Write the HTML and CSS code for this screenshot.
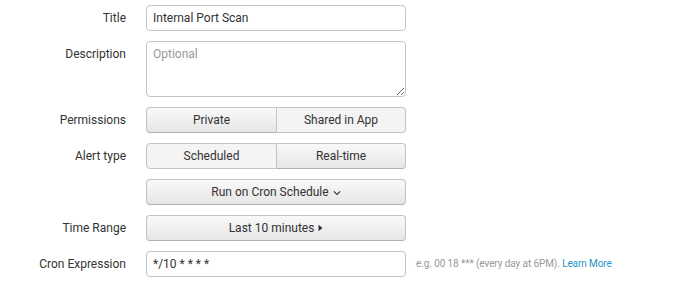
FILE: index.html
```html
<!DOCTYPE html>
<html lang="en">
    <head>
        <meta charset="UTF-8">
        <title>Alert settings</title>
        <link rel="stylesheet" href="styles.css">
    </head>
    <body>
        <form class="alert-form">
            <div class="row">
                <label class="label" for="title">Title</label>
                <input class="field" id="title" type="text" value="Internal Port Scan">
            </div>
            <div class="row">
                <label class="label" for="desc">Description</label>
                <textarea class="field area" id="desc" placeholder="Optional"></textarea>
            </div>
            <div class="row">
                <span class="label">Permissions</span>
                <div class="group">
                    <button type="button" class="btn">Private</button>
                    <button type="button" class="btn active">Shared in App</button>
                </div>
            </div>
            <div class="row">
                <span class="label">Alert type</span>
                <div class="group">
                    <button type="button" class="btn active">Scheduled</button>
                    <button type="button" class="btn">Real-time</button>
                </div>
            </div>
            <div class="row">
                <span class="label"></span>
                <button type="button" class="btn wide">Run on Cron Schedule
                    <svg class="caret" width="8" height="6" viewBox="0 0 8 6"><path d="M0.8 1.4 L4 4.4 L7.2 1.4" fill="none" stroke="#333" stroke-width="1.1"/></svg>
                </button>
            </div>
            <div class="row">
                <span class="label">Time Range</span>
                <button type="button" class="btn wide">Last 10 minutes
                    <svg class="arrow" width="5" height="8" viewBox="0 0 5 8"><path d="M0.5 0.8 L4.5 4 L0.5 7.2 Z" fill="#333"/></svg>
                </button>
            </div>
            <div class="row">
                <label class="label" for="cron">Cron Expression</label>
                <input class="field" id="cron" type="text" value="*/10 * * * *">
                <span class="hint">e.g. 00 18 *** (every day at 6PM). <a href="#">Learn More</a></span>
            </div>
        </form>
    </body>
</html>
```

FILE: styles.css
```css
*{
    font-family: Roboto, "Liberation Sans", sans-serif;
    box-sizing: border-box;
}
body{
    margin: 0;
    background: #fff;
    color: #333;
    font-size: 12px;
}
.alert-form{
    padding-top: 5px;
    display: flex;
    flex-direction: column;
    gap: 10px;
}
.row{
    display: flex;
    align-items: flex-start;
}
.label{
    width: 126px;
    margin-right: 20px;
    text-align: right;
    line-height: 26px;
    font-size: 12px;
    color: #333;
}
.field{
    width: 260px;
    height: 26px;
    border: 1px solid #c3c3c3;
    border-radius: 4px;
    padding: 0 6px;
    font-size: 12px;
    color: #333;
    background: #fff;
    outline: none;
}
.area{
    height: 56px;
    padding: 4px 6px;
    resize: vertical;
    line-height: 16px;
}
.area::placeholder{
    color: #999;
}
.group{
    display: flex;
    width: 260px;
}
.btn{
    height: 26px;
    border: 1px solid #c3c3c3;
    border-bottom-color: #b0b0b0;
    border-radius: 4px;
    background: linear-gradient(#f9f9f9, #e6e6e6);
    font-size: 12px;
    color: #333;
    padding: 0;
}
.group .btn{
    flex: 1;
}
.group .btn:first-child{
    border-top-right-radius: 0;
    border-bottom-right-radius: 0;
    width: 131px;
    flex: none;
}
.group .btn:last-child{
    border-top-left-radius: 0;
    border-bottom-left-radius: 0;
    border-left: none;
}
.btn.active{
    background: #f4f4f4;
    border-bottom-color: #c3c3c3;
}
.wide{
    width: 260px;
    display: flex;
    align-items: center;
    justify-content: center;
    gap: 4px;
}
.caret{
    margin-top: 1px;
}
.hint{
    margin-left: 10px;
    line-height: 26px;
    font-size: 10px;
    letter-spacing: -0.1px;
    color: #999;
}
.hint a{
    color: #1e93c6;
    text-decoration: none;
}
```
